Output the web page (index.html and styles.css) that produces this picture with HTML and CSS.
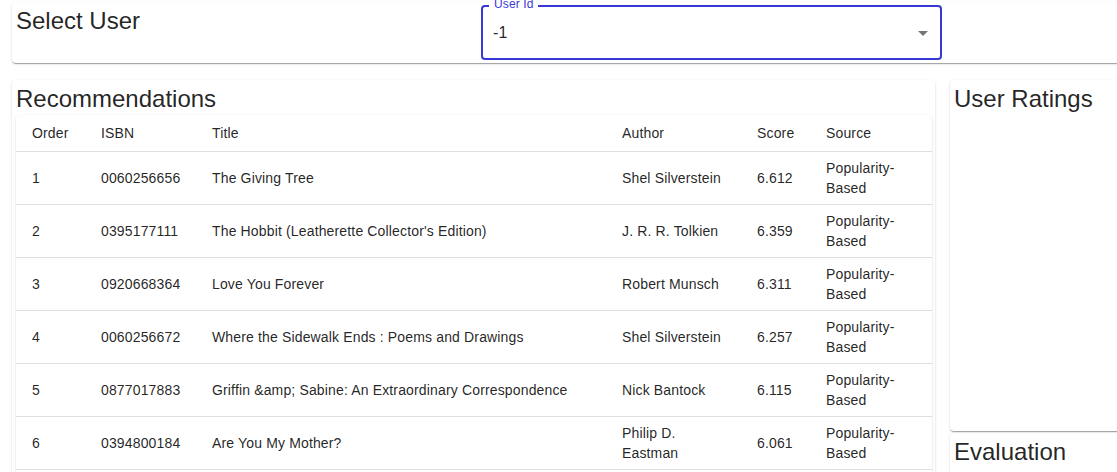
FILE: index.html
```html
<!DOCTYPE html>
<html>
<head>
<meta charset="utf-8">
<link rel="stylesheet" href="styles.css">
</head>
<body>
<div class="page">
  <div class="paper top-card">
    <h5 class="h5 top-title">Select User</h5>
    <div class="field">
      <span class="field-label">User Id</span>
      <span class="field-value">-1</span>
      <svg class="field-arrow" viewBox="0 0 10 5" width="10" height="5"><path d="M0 0 L10 0 L5 5 Z" fill="rgba(0,0,0,0.54)"/></svg>
    </div>
  </div>
  <div class="main">
    <div class="paper rec-card">
      <h5 class="h5 rec-title">Recommendations</h5>
      <div class="paper table-paper">
        <table class="rec-table">
          <colgroup>
            <col class="c-order"><col class="c-isbn"><col class="c-title"><col class="c-author"><col class="c-score"><col class="c-source">
          </colgroup>
          <thead>
            <tr><th>Order</th><th>ISBN</th><th>Title</th><th>Author</th><th>Score</th><th>Source</th></tr>
          </thead>
          <tbody>
            <tr><td>1</td><td>0060256656</td><td>The Giving Tree</td><td>Shel Silverstein</td><td>6.612</td><td>Popularity-Based</td></tr>
            <tr><td>2</td><td>0395177111</td><td>The Hobbit (Leatherette Collector's Edition)</td><td>J. R. R. Tolkien</td><td>6.359</td><td>Popularity-Based</td></tr>
            <tr><td>3</td><td>0920668364</td><td>Love You Forever</td><td>Robert Munsch</td><td>6.311</td><td>Popularity-Based</td></tr>
            <tr><td>4</td><td>0060256672</td><td>Where the Sidewalk Ends : Poems and Drawings</td><td>Shel Silverstein</td><td>6.257</td><td>Popularity-Based</td></tr>
            <tr><td>5</td><td>0877017883</td><td>Griffin &amp;amp; Sabine: An Extraordinary Correspondence</td><td>Nick Bantock</td><td>6.115</td><td>Popularity-Based</td></tr>
            <tr><td>6</td><td>0394800184</td><td>Are You My Mother?</td><td>Philip D. Eastman</td><td>6.061</td><td>Popularity-Based</td></tr>
            <tr class="row-hidden"><td>7</td><td>0590353403</td><td>Harry Potter and the Sorcerer's Stone</td><td>J. K. Rowling</td><td>6.002</td><td>Popularity-Based</td></tr>
          </tbody>
        </table>
      </div>
    </div>
    <div class="side">
      <div class="paper side-card ratings-card">
        <h5 class="h5">User Ratings</h5>
      </div>
      <div class="paper side-card eval-card">
        <h5 class="h5">Evaluation</h5>
      </div>
    </div>
  </div>
</div>
</body>
</html>
```

FILE: styles.css
```css
html, body {
  margin: 0;
  padding: 0;
  background: #fff;
  overflow: hidden;
}
body {
  font-family: "Liberation Sans", Arial, sans-serif;
  color: rgba(0, 0, 0, 0.87);
}
.page {
  width: 1300px;
  padding: 2px 0 0 12px;
  box-sizing: border-box;
}
.paper {
  background: #fff;
  border-radius: 4px;
  box-shadow: 0px 2px 1px -1px rgba(0,0,0,0.2), 0px 1px 1px 0px rgba(0,0,0,0.14), 0px 1px 3px 0px rgba(0,0,0,0.12);
}
.h5 {
  margin: 0;
  font-size: 24px;
  font-weight: 400;
  line-height: 32px;
}
.top-card {
  display: flex;
  align-items: flex-start;
  height: 61px;
  box-sizing: border-box;
  padding: 3px 4px 0 4px;
}
.top-title {
  width: 465px;
  flex: none;
}
.field {
  position: relative;
  width: 461px;
  height: 55px;
  box-sizing: border-box;
  border: 2px solid #3838d6;
  border-radius: 4px;
  display: flex;
  align-items: center;
  padding: 0 12px 0 10px;
}
.field-label {
  position: absolute;
  left: 6px;
  top: -9px;
  padding: 0 5px;
  background: #fff;
  color: #3a3ad8;
  font-size: 12px;
  line-height: 12px;
  letter-spacing: 0.00938em;
}
.field-value {
  flex: 1;
  font-size: 16px;
  line-height: 23px;
  letter-spacing: 0.00938em;
}
.field-arrow {
  display: block;
  margin-top: 1px;
}
.main {
  display: flex;
  gap: 15px;
  margin-top: 17px;
  align-items: flex-start;
}
.rec-card {
  width: 923px;
  flex: none;
  box-sizing: border-box;
  padding: 3px 3px 0 4px;
  height: 480px;
}
.table-paper {
  overflow: hidden;
}
.rec-table {
  width: 100%;
  table-layout: fixed;
  border-collapse: collapse;
  font-size: 14px;
  letter-spacing: 0.01071em;
}
.c-order { width: 69px; }
.c-isbn { width: 111px; }
.c-title { width: 410px; }
.c-author { width: 135px; }
.c-score { width: 69px; }
.c-source { width: 122px; }
.rec-table th,
.rec-table td {
  text-align: left;
  padding: 6px 16px;
  border-bottom: 1px solid #e0e0e0;
  vertical-align: middle;
}
.rec-table th {
  font-weight: 400;
  line-height: 24px;
}
.rec-table td {
  line-height: 20px;
  height: 40px;
  box-sizing: content-box;
}
.side {
  width: 300px;
  flex: none;
  display: flex;
  flex-direction: column;
  gap: 2px;
}
.side-card {
  box-sizing: border-box;
  padding: 3px 4px 0 4px;
}
.ratings-card {
  height: 351px;
}
.eval-card {
  height: 100px;
}
```
